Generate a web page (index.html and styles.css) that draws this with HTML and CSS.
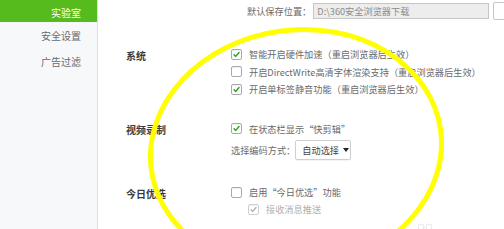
FILE: index.html
```html
<!DOCTYPE html>
<html lang="zh-CN">
<head>
<meta charset="utf-8">
<title>实验室</title>
<link rel="stylesheet" href="styles.css">
</head>
<body>
<div class="app">
  <aside class="sidebar">
    <div class="nav-item active">实验室</div>
    <div class="nav-item">安全设置</div>
    <div class="nav-item">广告过滤</div>
  </aside>
  <main class="content">
    <div class="group row-top">
      <div class="group-title"></div>
      <div class="path-row">
        <span class="field-label">默认保存位置：</span>
        <div class="path-input">D:\360安全浏览器下载</div>
        <div class="path-btn"></div>
      </div>
    </div>

    <section class="group sec-system">
      <div class="group-title">系统</div>
      <div class="options">
        <div class="opt"><span class="cb checked"><svg viewBox="0 0 10 10"><path d="M2.3 5.2 L4.2 7.1 L7.8 2.8" /></svg></span>智能开启硬件加速<span class="fw">（</span>重启浏览器后生效<span class="fw">）</span></div>
        <div class="opt"><span class="cb"></span>开启DirectWrite高清字体渲染支持<span class="fw">（</span>重启浏览器后生效<span class="fw">）</span></div>
        <div class="opt"><span class="cb checked"><svg viewBox="0 0 10 10"><path d="M2.3 5.2 L4.2 7.1 L7.8 2.8" /></svg></span>开启单标签静音功能<span class="fw">（</span>重启浏览器后生效<span class="fw">）</span></div>
      </div>
    </section>

    <section class="group sec-video">
      <div class="group-title">视频录制</div>
      <div class="options">
        <div class="opt"><span class="cb checked"><svg viewBox="0 0 10 10"><path d="M2.3 5.2 L4.2 7.1 L7.8 2.8" /></svg></span>在状态栏显示<span class="fw">“</span>快剪辑<span class="fw">”</span></div>
        <div class="select-row">
          <span class="field-label">选择编码方式：</span>
          <div class="select">自动选择<span class="caret"></span></div>
        </div>
      </div>
    </section>

    <section class="group sec-today">
      <div class="group-title">今日优选</div>
      <div class="options">
        <div class="opt"><span class="cb"></span>启用<span class="fw">“</span>今日优选<span class="fw">”</span>功能</div>
        <div class="opt sub disabled"><span class="cb checked"><svg viewBox="0 0 10 10"><path d="M2.3 5.2 L4.2 7.1 L7.8 2.8" /></svg></span>接收消息推送</div>
      </div>
    </section>
  </main>
</div>
<svg class="annotation" width="504" height="229" viewBox="0 0 504 229">
  <ellipse cx="296" cy="150" rx="146" ry="120" transform="rotate(-8 296 150)" />
  <circle class="wm" cx="421" cy="227" r="3" />
  <circle class="wm" cx="429" cy="227" r="3" />
</svg>
</body>
</html>
```

FILE: styles.css
```css
html, body {
  margin: 0;
  padding: 0;
  background: #ffffff;
}

body {
  width: 504px;
  height: 229px;
  overflow: hidden;
  position: relative;
  font-family: "Noto Sans CJK SC", "Noto Sans", sans-serif;
  text-spacing-trim: space-all;
}

.app {
  display: flex;
  height: 229px;
}

.sidebar {
  width: 97px;
  flex: none;
  background: #f7f8fa;
  border-right: 1px solid #dcdfe4;
  display: flex;
  flex-direction: column;
}

.nav-item {
  height: 26.5px;
  display: flex;
  align-items: center;
  justify-content: flex-end;
  padding-right: 16px;
  font-size: 10px;
  color: #666a70;
}

.nav-item.active {
  height: 22px;
  padding-top: 2px;
  box-sizing: border-box;
  background: #56bb1c;
  color: #ffffff;
}

.content {
  flex: 1;
  padding-left: 28px;
  display: flex;
  flex-direction: column;
  font-size: 9.2px;
  color: #6a6a6a;
}

.group {
  display: grid;
  grid-template-columns: 105px 1fr;
  align-items: start;
}

.group-title {
  font-size: 10px;
  font-weight: bold;
  color: #3a3a3a;
  height: 17.5px;
  display: flex;
  align-items: center;
  padding-top: 2px;
  box-sizing: border-box;
}

.row-top .group-title {
  height: 22px;
}

.path-row {
  height: 22px;
  display: flex;
  align-items: center;
  padding-left: 16px;
  white-space: nowrap;
}

.field-label {
  color: #6a6a6a;
}

.path-input {
  margin-left: 2px;
  height: 14px;
  flex: none;
  border: 1px solid #c6c6c6;
  background: #ededed;
  color: #8c8c8c;
  line-height: 14px;
  padding-left: 3px;
  box-sizing: content-box;
  width: 171px;
}

.path-btn {
  margin-left: 4px;
  width: 20px;
  height: 16px;
  flex: none;
  border: 1px solid #c6c6c6;
  border-radius: 2px;
  background: #ffffff;
}

.sec-system {
  margin-top: 23.5px;
}

.sec-video {
  margin-top: 22px;
}

.sec-today {
  margin-top: 24px;
}

.options {
  display: flex;
  flex-direction: column;
}

.opt {
  height: 17.5px;
  display: flex;
  align-items: center;
  white-space: nowrap;
}

.fw {
  display: inline-block;
  width: 1em;
  text-align: center;
  font-variant-east-asian: full-width;
  text-spacing-trim: space-all;
}

.opt.sub {
  height: 16px;
  padding-left: 17px;
}

.opt.disabled {
  color: #b0b0b0;
}

.cb {
  width: 9px;
  height: 9px;
  flex: none;
  border: 1px solid #a9a9a9;
  border-radius: 2px;
  background: #ffffff;
  box-shadow: inset 0 1px 1px rgba(0, 0, 0, 0.06);
  margin-right: 7px;
  display: flex;
}

.cb svg {
  width: 9px;
  height: 9px;
}

.cb svg path {
  fill: none;
  stroke: #2fa01a;
  stroke-width: 1.6;
  stroke-linecap: round;
  stroke-linejoin: round;
}

.opt.disabled .cb {
  border-color: #cfcfcf;
}

.opt.disabled .cb svg path {
  stroke: #b5b5b5;
}

.select-row {
  display: flex;
  align-items: center;
  margin-top: 2px;
  height: 20px;
  white-space: nowrap;
}

.select {
  width: 56px;
  height: 20px;
  box-sizing: border-box;
  border: 1px solid #cfcfcf;
  border-radius: 2px;
  background: #ffffff;
  box-shadow: 0 1px 1px rgba(0, 0, 0, 0.05);
  color: #444444;
  display: flex;
  align-items: center;
  padding-left: 6px;
}

.caret {
  margin-left: 4px;
  width: 0;
  height: 0;
  border-left: 3px solid transparent;
  border-right: 3px solid transparent;
  border-top: 4px solid #222222;
}

.annotation {
  position: absolute;
  left: 0;
  top: 0;
  pointer-events: none;
}

.annotation ellipse {
  fill: none;
  stroke: #ffff00;
  stroke-width: 5;
}

.annotation .wm {
  fill: none;
  stroke: #e6e6e6;
  stroke-width: 1;
}
```
